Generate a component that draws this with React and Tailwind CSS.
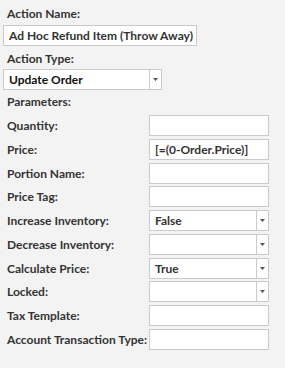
import React from "react";

const font = { fontFamily: 'Lato, "Noto Sans", sans-serif' };

const Arrow = () => (
  <svg width="5" height="3" viewBox="0 0 5 3" className="block">
    <path d="M0 0H5L2.5 3Z" fill="#555" />
  </svg>
);

const TextBox = ({ value, className = "" }) => (
  <div
    className={`h-[21px] bg-white border border-[#cacaca] flex items-center pl-[5px] text-[12px] font-bold text-[#333] whitespace-nowrap overflow-hidden ${className}`}
  >
    {value}
  </div>
);

const Combo = ({ value, className = "", strong }) => (
  <div className={`h-[21px] bg-white border border-[#cacaca] flex ${className}`}>
    <div
      className={`flex-1 flex items-center pl-[5px] text-[12px] font-bold whitespace-nowrap ${
        strong ? "text-[#111]" : "text-[#333]"
      }`}
    >
      {value}
    </div>
    <div className="w-[12px] border-l border-[#cacaca] flex items-center justify-center">
      <Arrow />
    </div>
  </div>
);

const params = [
  { label: "Quantity:", type: "text", value: "", mt: "mt-0" },
  { label: "Price:", type: "text", value: "[=(0-Order.Price)]", mt: "mt-[3px]" },
  { label: "Portion Name:", type: "text", value: "", mt: "mt-[3px]" },
  { label: "Price Tag:", type: "text", value: "", mt: "mt-[2px]" },
  { label: "Increase Inventory:", type: "combo", value: "False", mt: "mt-[3px]" },
  { label: "Decrease Inventory:", type: "combo", value: "", mt: "mt-[3px]" },
  { label: "Calculate Price:", type: "combo", value: "True", mt: "mt-[3px]" },
  { label: "Locked:", type: "combo", value: "", mt: "mt-[2px]" },
  { label: "Tax Template:", type: "text", value: "", mt: "mt-[3px]" },
  { label: "Account Transaction Type:", type: "text", value: "", mt: "mt-[3px]" },
];

export default function App() {
  return (
    <div
      className="w-[285px] h-[368px] bg-[#f3f3f3] pl-[3px] pt-[5px] overflow-hidden text-[#333]"
      style={font}
    >
      <div className="h-[18px] pl-[4px] flex items-center text-[12px] font-bold">Action Name:</div>
      <TextBox value="Ad Hoc Refund Item (Throw Away)" className="mt-[2px] w-[194px]" />

      <div className="h-[18px] mt-[4px] pl-[4px] flex items-center text-[12px] font-bold">Action Type:</div>
      <Combo value="Update Order" strong className="mt-[1px] w-[159px] h-[20px]" />

      <div className="h-[18px] mt-[3px] pl-[4px] flex items-center text-[12px] font-bold">Parameters:</div>

      <div className="mt-[4px] flex flex-col">
        {params.map((p) => (
          <div key={p.label} className={`flex items-center ${p.mt}`}>
            <div className="w-[146px] pl-[4px] text-[12px] font-bold whitespace-nowrap">{p.label}</div>
            {p.type === "text" ? (
              <TextBox value={p.value} className="w-[120px]" />
            ) : (
              <Combo value={p.value} className="w-[120px]" />
            )}
          </div>
        ))}
      </div>
    </div>
  );
}
